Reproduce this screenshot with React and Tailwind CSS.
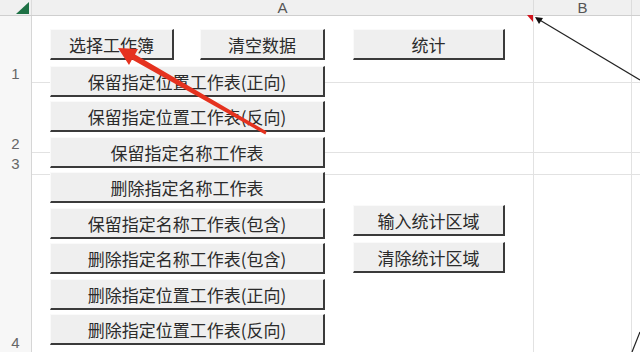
import React from 'react';

const font = "font-['Noto_Sans_CJK_SC','Noto_Sans',sans-serif]";

function Btn({ label, className = '' }) {
  return (
    <div
      className={`flex items-center justify-center h-[31px] bg-[#efefef] border-l border-t border-[#fafafa] border-r-2 border-b-2 border-r-[#3a3a3a] border-b-[#3a3a3a] text-[17px] leading-none text-[#2b2b2b] ${className}`}
    >
      {label}
    </div>
  );
}

const rows = [
  { n: '1', h: 'h-[67px]', mb: 'mb-[0px]' },
  { n: '2', h: 'h-[70px]', mb: 'mb-[0px]' },
  { n: '3', h: 'h-[22px]', mb: 'mb-[2px]' },
  { n: '4', h: 'h-[180px]', mb: 'mb-[3px]' },
];

const leftList = [
  ['保留指定位置工作表(正向)', 'mt-[6px]'],
  ['保留指定位置工作表(反向)', 'mt-[4px]'],
  ['保留指定名称工作表', 'mt-[5px]'],
  ['删除指定名称工作表', 'mt-[4px]'],
  ['保留指定名称工作表(包含)', 'mt-[5px]'],
  ['删除指定名称工作表(包含)', 'mt-[4px]'],
  ['删除指定位置工作表(正向)', 'mt-[5px]'],
  ['删除指定位置工作表(反向)', 'mt-[4px]'],
];

export default function App() {
  return (
    <div className={`relative w-[640px] h-[352px] overflow-hidden bg-white ${font}`}>
      {/* column headers */}
      <div className="flex h-[16px] bg-[#f0f0f0] border-b border-[#cfcfcf] text-[15px] leading-[15px] text-[#555]">
        <div className="relative w-[32px] border-r border-[#dcdcdc]">
          <svg width="32" height="15" className="absolute left-0 top-0">
            <polygon points="29,2 29,14 16,14" fill="#1e7145" />
          </svg>
        </div>
        <div className="w-[502px] text-center border-r border-[#dcdcdc] font-['Liberation_Sans',sans-serif]">A</div>
        <div className="w-[98px] text-center border-r border-[#dcdcdc] font-['Liberation_Sans',sans-serif]">B</div>
        <div className="flex-1" />
      </div>

      {/* body */}
      <div className="flex">
        <div className="w-[32px] bg-[#f7f7f7] border-r border-[#d6d6d6] text-[15px] text-[#666] font-['Liberation_Sans',sans-serif]">
          {rows.map(r => (
            <div key={r.n} className={`${r.h} flex items-end justify-center`}>
              <span className={`leading-[18px] ${r.mb}`}>{r.n}</span>
            </div>
          ))}
        </div>
        <div className="flex-1">
          {rows.map(r => (
            <div key={r.n} className={`${r.h} flex border-b border-[#e2e2e2]`}>
              <div className="w-[502px] border-r border-[#e2e2e2]" />
              <div className="w-[98px] border-r border-[#e2e2e2]" />
              <div className="flex-1" />
            </div>
          ))}
        </div>
      </div>

      {/* form buttons floating over the sheet */}
      <div className="absolute left-[50px] top-[29px] flex gap-[28px]">
        <div className="w-[275px] flex flex-col">
          <div className="flex gap-[26px]">
            <Btn label="选择工作簿" className="w-[124px]" />
            <Btn label="清空数据" className="w-[125px]" />
          </div>
          {leftList.map(([t, m]) => (
            <Btn key={t} label={t} className={m} />
          ))}
        </div>
        <div className="w-[152px] flex flex-col">
          <Btn label="统计" />
          <Btn label="输入统计区域" className="mt-[145px]" />
          <Btn label="清除统计区域" className="mt-[6px]" />
        </div>
      </div>

      {/* annotation arrows */}
      <svg width="640" height="352" className="absolute left-0 top-0 pointer-events-none">
        <polygon
          points="118,48 138,49 135,54.5 266.7,131.5 265.3,134.5 132,59.5 129,65"
          fill="#e5321f"
        />
        <polygon points="527,15 533,15 533,22" fill="#d0161e" />
        <line x1="538" y1="19" x2="640" y2="80" stroke="#222" strokeWidth="1.2" />
        <polygon points="535,17 543,18 539,24" fill="#111" />
        <line x1="632" y1="352" x2="640" y2="332" stroke="#222" strokeWidth="1.2" />
      </svg>
    </div>
  );
}
